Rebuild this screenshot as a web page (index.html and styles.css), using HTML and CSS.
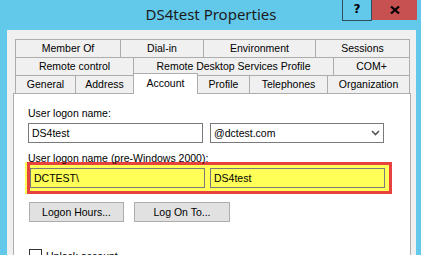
FILE: index.html
```html
<!DOCTYPE html>
<html lang="en">
<head>
    <meta charset="UTF-8">
    <title>DS4test Properties</title>
    <link rel="stylesheet" href="styles.css">
</head>
<body>
    <div class="window">
        <div class="titlebar">
            <span></span>
            <h1 class="title">DS4test Properties</h1>
            <div class="caption-buttons">
                <span class="cap-help">?</span>
                <span class="cap-close">
                    <svg width="10" height="8" viewBox="0 0 10 8">
                        <path d="M1 0.5 L9 7.5 M9 0.5 L1 7.5" stroke="#000" stroke-width="2.2" fill="none"/>
                    </svg>
                </span>
            </div>
        </div>

        <div class="frame">
            <!-- Tab rows -->
            <div class="tabs">
                <div class="tab-row row-1">
                    <div class="tab">Member Of</div>
                    <div class="tab">Dial-in</div>
                    <div class="tab">Environment</div>
                    <div class="tab">Sessions</div>
                </div>
                <div class="tab-row row-2">
                    <div class="tab">Remote control</div>
                    <div class="tab">Remote Desktop Services Profile</div>
                    <div class="tab">COM+</div>
                </div>
                <div class="tab-row row-3">
                    <div class="tab">General</div>
                    <div class="tab">Address</div>
                    <div class="tab active">Account</div>
                    <div class="tab">Profile</div>
                    <div class="tab">Telephones</div>
                    <div class="tab">Organization</div>
                </div>
            </div>

            <!-- Account page -->
            <div class="panel">
                <div class="label">User logon name:</div>
                <div class="field-row">
                    <div class="field">DS4test</div>
                    <div class="field dropdown">
                        <span>@dctest.com</span>
                        <svg width="9" height="6" viewBox="0 0 9 6">
                            <path d="M1 1 L4.5 4.5 L8 1" stroke="#555" stroke-width="1.6" fill="none"/>
                        </svg>
                    </div>
                </div>

                <div class="label label-pre">User logon name (pre-Windows 2000):</div>
                <div class="highlight">
                    <div class="field marked">DCTEST\</div>
                    <div class="field marked">DS4test</div>
                </div>

                <div class="button-row">
                    <div class="btn btn-hours">Logon Hours...</div>
                    <div class="btn btn-logon">Log On To...</div>
                </div>

                <div class="check-row">
                    <span class="checkbox"></span>
                    <span>Unlock account</span>
                </div>
            </div>
        </div>
    </div>
</body>
</html>
```

FILE: styles.css
```css
* {
    margin: 0;
    padding: 0;
    box-sizing: border-box;
}
body {
    background: #63c9ea;
    font-family: "Liberation Sans", Arial, sans-serif;
    font-size: 10.5px;
    color: #000;
    overflow: hidden;
    height: 255px;
}
.titlebar {
    display: grid;
    grid-template-columns: 1fr auto 1fr;
    height: 30px;
    padding: 0 4px 0 5px;
}
.title {
    font-family: "Noto Sans", "Open Sans", sans-serif;
    font-weight: normal;
    font-size: 15px;
    line-height: 28px;
    color: #1b1b1b;
}
.caption-buttons {
    justify-self: end;
    align-self: start;
    display: flex;
    height: 21px;
}
.cap-help {
    width: 30px;
    border: 1px solid #2e4f5f;
    border-top: none;
    font-family: "DejaVu Sans", sans-serif;
    font-weight: bold;
    font-size: 12px;
    line-height: 19px;
    text-align: center;
}
.cap-close {
    width: 45px;
    height: 20px;
    background: #c75050;
    display: flex;
    align-items: center;
    justify-content: center;
}
.frame {
    margin: 0 5px 0 7px;
    background: #f0f0f0;
    padding: 9px 5px 0 6px;
    height: 225px;
}
.tabs {
    margin: 0 1px 0 2px;
}
.tab-row {
    display: grid;
}
.row-1 {
    grid-template-columns: 105px 83px 112px 1fr;
}
.row-2 {
    grid-template-columns: 118px 200px 1fr;
}
.row-3 {
    grid-template-columns: 60px 58px 65px 51px 78px 1fr;
}
.tab {
    height: 18px;
    border-top: 1px solid #adadad;
    border-left: 1px solid #adadad;
    background: #f0f0f0;
    line-height: 17px;
    text-align: center;
    white-space: nowrap;
}
.tab:last-child {
    border-right: 1px solid #adadad;
}
.tab.active {
    position: relative;
    z-index: 1;
    height: 21px;
    margin-top: -2px;
    margin-bottom: -1px;
    background: #fff;
    border-right: 1px solid #adadad;
    line-height: 18px;
}
.tab.active + .tab {
    border-left: none;
}
.panel {
    height: 200px;
    background: #fff;
    border: 1px solid #adadad;
    padding: 12px 14px 0 14px;
}
.label {
    line-height: 14px;
    margin-bottom: 3px;
}
.label-pre {
    margin-top: 8px;
    margin-bottom: 0;
}
.field-row {
    display: flex;
    gap: 7px;
}
.field {
    width: 175px;
    height: 20px;
    border: 1px solid #7a7a7a;
    padding-left: 3px;
    line-height: 18px;
    background: #fff;
}
.dropdown {
    width: 174px;
    display: flex;
    justify-content: space-between;
    align-items: center;
    padding-right: 3px;
}
.highlight {
    display: flex;
    gap: 5px;
    width: 365px;
    margin: -3px 0 0 -1px;
    padding: 3px 4px 3px 0;
    border: 3px solid #e8423f;
    background: #ffff57;
    box-shadow: -2px 0 0 #ffff57;
}
.field.marked {
    background: #ffff57;
}
.button-row {
    display: flex;
    gap: 10px;
    margin: 8px 0 0 1px;
}
.btn {
    height: 20px;
    background: #e1e1e1;
    border: 1px solid #adadad;
    line-height: 18px;
    text-align: center;
}
.btn-hours {
    width: 95px;
}
.btn-logon {
    width: 96px;
}
.check-row {
    display: flex;
    align-items: center;
    gap: 4px;
    margin: 27px 0 0 1px;
}
.checkbox {
    width: 13px;
    height: 13px;
    border: 1px solid #333;
    background: #fff;
}
```
